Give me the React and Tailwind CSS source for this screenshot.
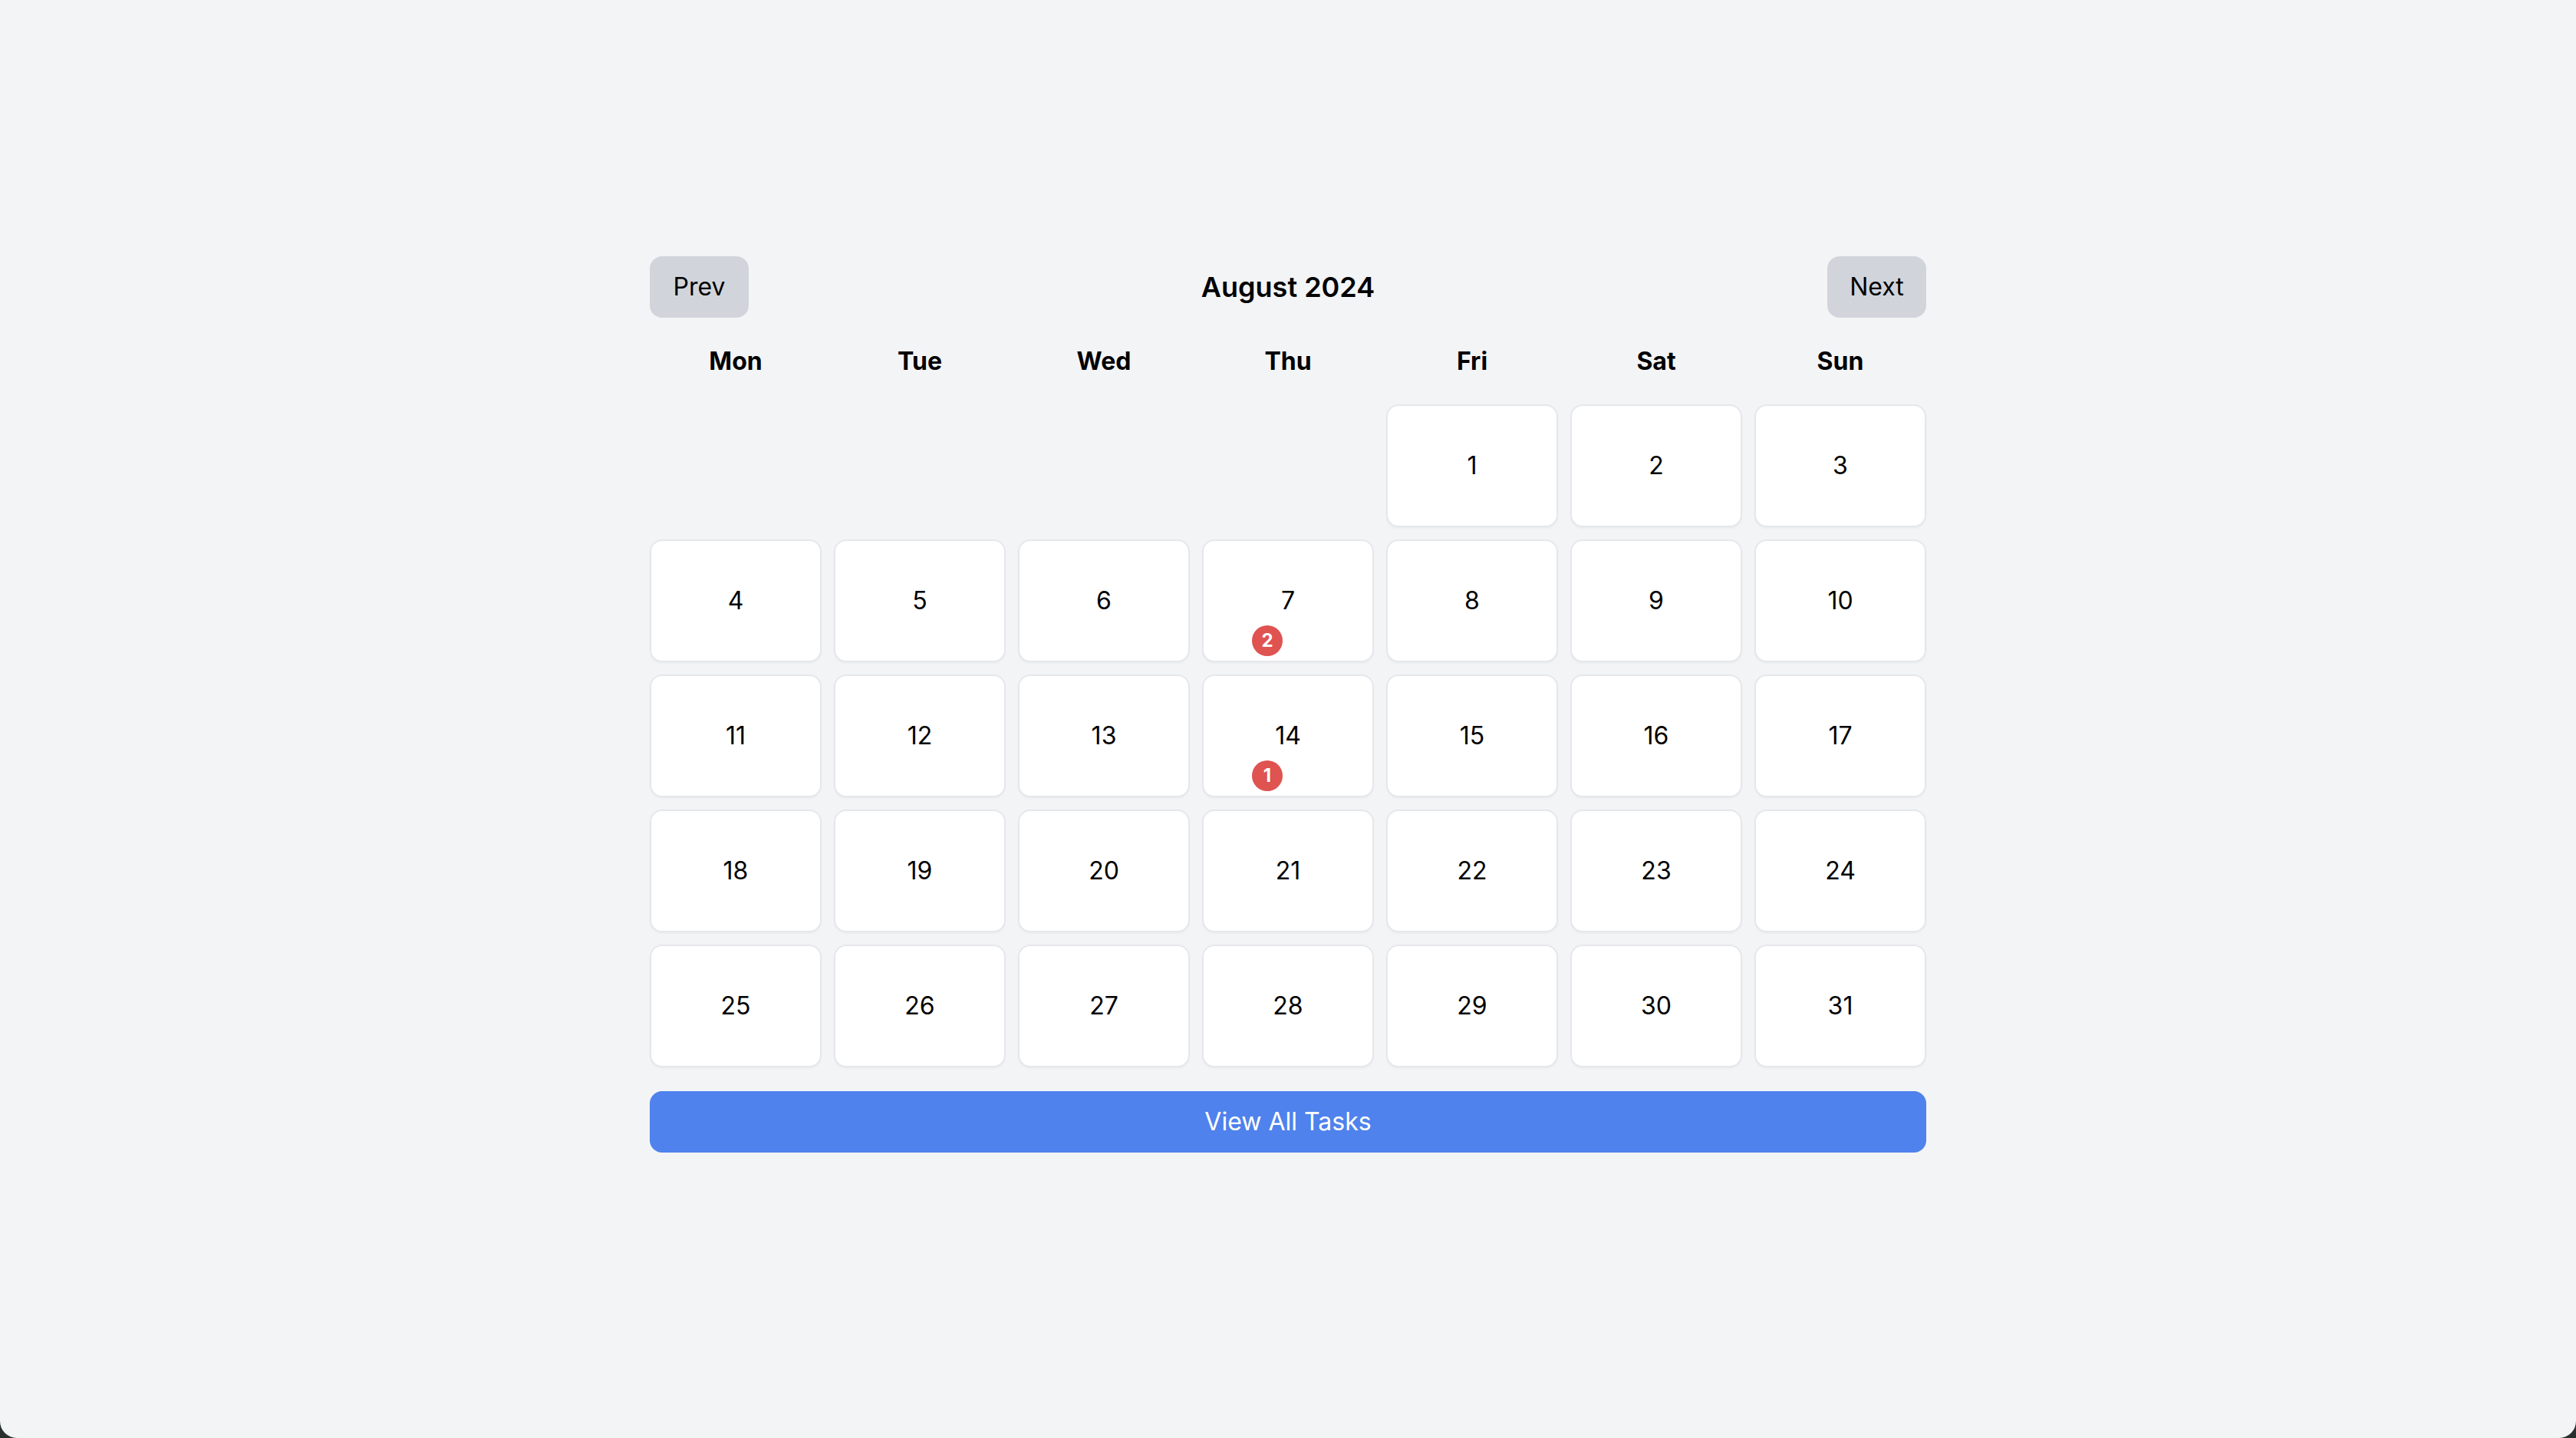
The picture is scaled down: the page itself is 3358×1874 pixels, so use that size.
import React from "react";

const DAY_NAMES = ["Mon", "Tue", "Wed", "Thu", "Fri", "Sat", "Sun"];
const TASK_COUNTS = { 7: 2, 14: 1 };

function DayCell({ day }) {
  const count = TASK_COUNTS[day];
  return (
    <div className="relative flex h-[160px] items-center justify-center rounded-[16px] border-2 border-[#e5e7eb] bg-white text-[32px] text-black shadow-[0_2px_2px_rgba(0,0,0,0.03)]">
      {day}
      {count ? (
        <span className="absolute bottom-[6px] left-[63px] flex h-[40px] w-[40px] items-center justify-center rounded-full bg-[#df5350] text-[24px] font-bold text-white">
          {count}
        </span>
      ) : null}
    </div>
  );
}

export default function App() {
  const blanks = Array.from({ length: 4 });
  const days = Array.from({ length: 31 }, (_, i) => i + 1);

  return (
    <div className="h-[1874px] w-full bg-[#27302f]" style={{ fontFamily: "Inter, 'Noto Sans', sans-serif" }}>
      <div className="h-full w-full rounded-b-[22px] bg-[#f3f4f6] pt-[334px]">
        <div className="mx-auto w-[1664px]">
          <div className="flex h-[80px] items-center justify-between">
            <button className="h-[80px] w-[129px] rounded-[16px] bg-[#d1d5db] text-[32px] text-black">Prev</button>
            <h2 className="text-[36px] font-semibold text-black">August 2024</h2>
            <button className="h-[80px] w-[129px] rounded-[16px] bg-[#d1d5db] text-[32px] text-black">Next</button>
          </div>

          <div className="mt-[33px] grid grid-cols-7 gap-x-[16px]">
            {DAY_NAMES.map((name) => (
              <div key={name} className="h-[48px] text-center text-[32px] font-bold leading-[48px] text-black">
                {name}
              </div>
            ))}
          </div>

          <div className="mt-[32px] grid grid-cols-7 gap-[16px]">
            {blanks.map((_, i) => (
              <div key={`blank-${i}`} className="h-[160px]" />
            ))}
            {days.map((day) => (
              <DayCell key={day} day={day} />
            ))}
          </div>

          <button className="mt-[31px] h-[80px] w-full rounded-[16px] bg-[#4f82ec] text-[32px] text-white">
            View All Tasks
          </button>
        </div>
      </div>
    </div>
  );
}
